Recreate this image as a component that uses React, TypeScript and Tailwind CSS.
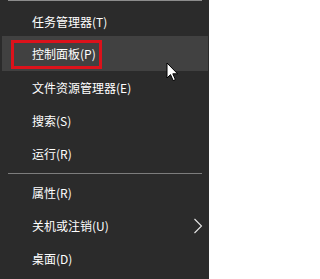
import { useState } from "react";

type Item = { label: string; key: string; sub?: boolean };

const groupA: Item[] = [
  { label: "任务管理器", key: "T" },
  { label: "控制面板", key: "P" },
  { label: "文件资源管理器", key: "E" },
  { label: "搜索", key: "S" },
  { label: "运行", key: "R" },
];

const groupB: Item[] = [
  { label: "属性", key: "R" },
  { label: "关机或注销", key: "U", sub: true },
  { label: "桌面", key: "D" },
];

function Chevron() {
  return (
    <svg width="10" height="16" viewBox="0 0 10 16" className="ml-auto mr-[5px]">
      <polyline points="1.5,1 8.5,8 1.5,15" fill="none" stroke="#e6e6e6" strokeWidth="1.1" />
    </svg>
  );
}

function Cursor() {
  return (
    <svg width="13" height="20" viewBox="0 0 13 20" className="absolute left-[166px] top-[62px]">
      <path d="M1,1 L1,16 L4.5,12.6 L7.2,18.6 L9.4,17.6 L6.8,11.8 L11.6,11.8 Z" fill="#ffffff" stroke="#000000" strokeWidth="1" strokeLinejoin="round" />
    </svg>
  );
}

function Row({ item, active, h }: { item: Item; active: boolean; h: string }) {
  return (
    <div className={`relative flex items-center pl-[30px] ${h} ${active ? "bg-[#414141]" : ""}`}>
      <span className="text-[12px] leading-none text-white">
        {item.label}({item.key})
      </span>
      {active && (
        <div className="absolute left-[9px] top-[4px] h-[29px] w-[91px] border-[3px] border-[#dc121b]" />
      )}
      {item.sub && <Chevron />}
    </div>
  );
}

function App() {
  const [active] = useState(1);

  return (
    <div
      className="relative h-[279px] w-[209px] overflow-hidden bg-[#2b2b2b] pl-[2px] pr-[1px]"
      style={{ fontFamily: '"Noto Sans CJK SC", "Noto Sans", sans-serif' }}
    >
      <div className="mx-[6px] h-px bg-[#8c8c8c]" />
      <div className="pt-[6px]">
        {groupA.map((item, i) => (
          <Row
            key={item.label}
            item={item}
            active={i === active}
            h={i === 0 ? "h-[29px]" : i === 1 ? "h-[35px]" : "h-[33px]"}
          />
        ))}
      </div>
      <div className="flex h-[6px] items-center">
        <div className="mx-[6px] h-px w-full bg-[#7d7d7d]" />
      </div>
      <div className="flex flex-col">
        {groupB.map((item) => (
          <Row key={item.label} item={item} active={false} h="h-[33px]" />
        ))}
      </div>
      <Cursor />
    </div>
  );
}

export default App;
